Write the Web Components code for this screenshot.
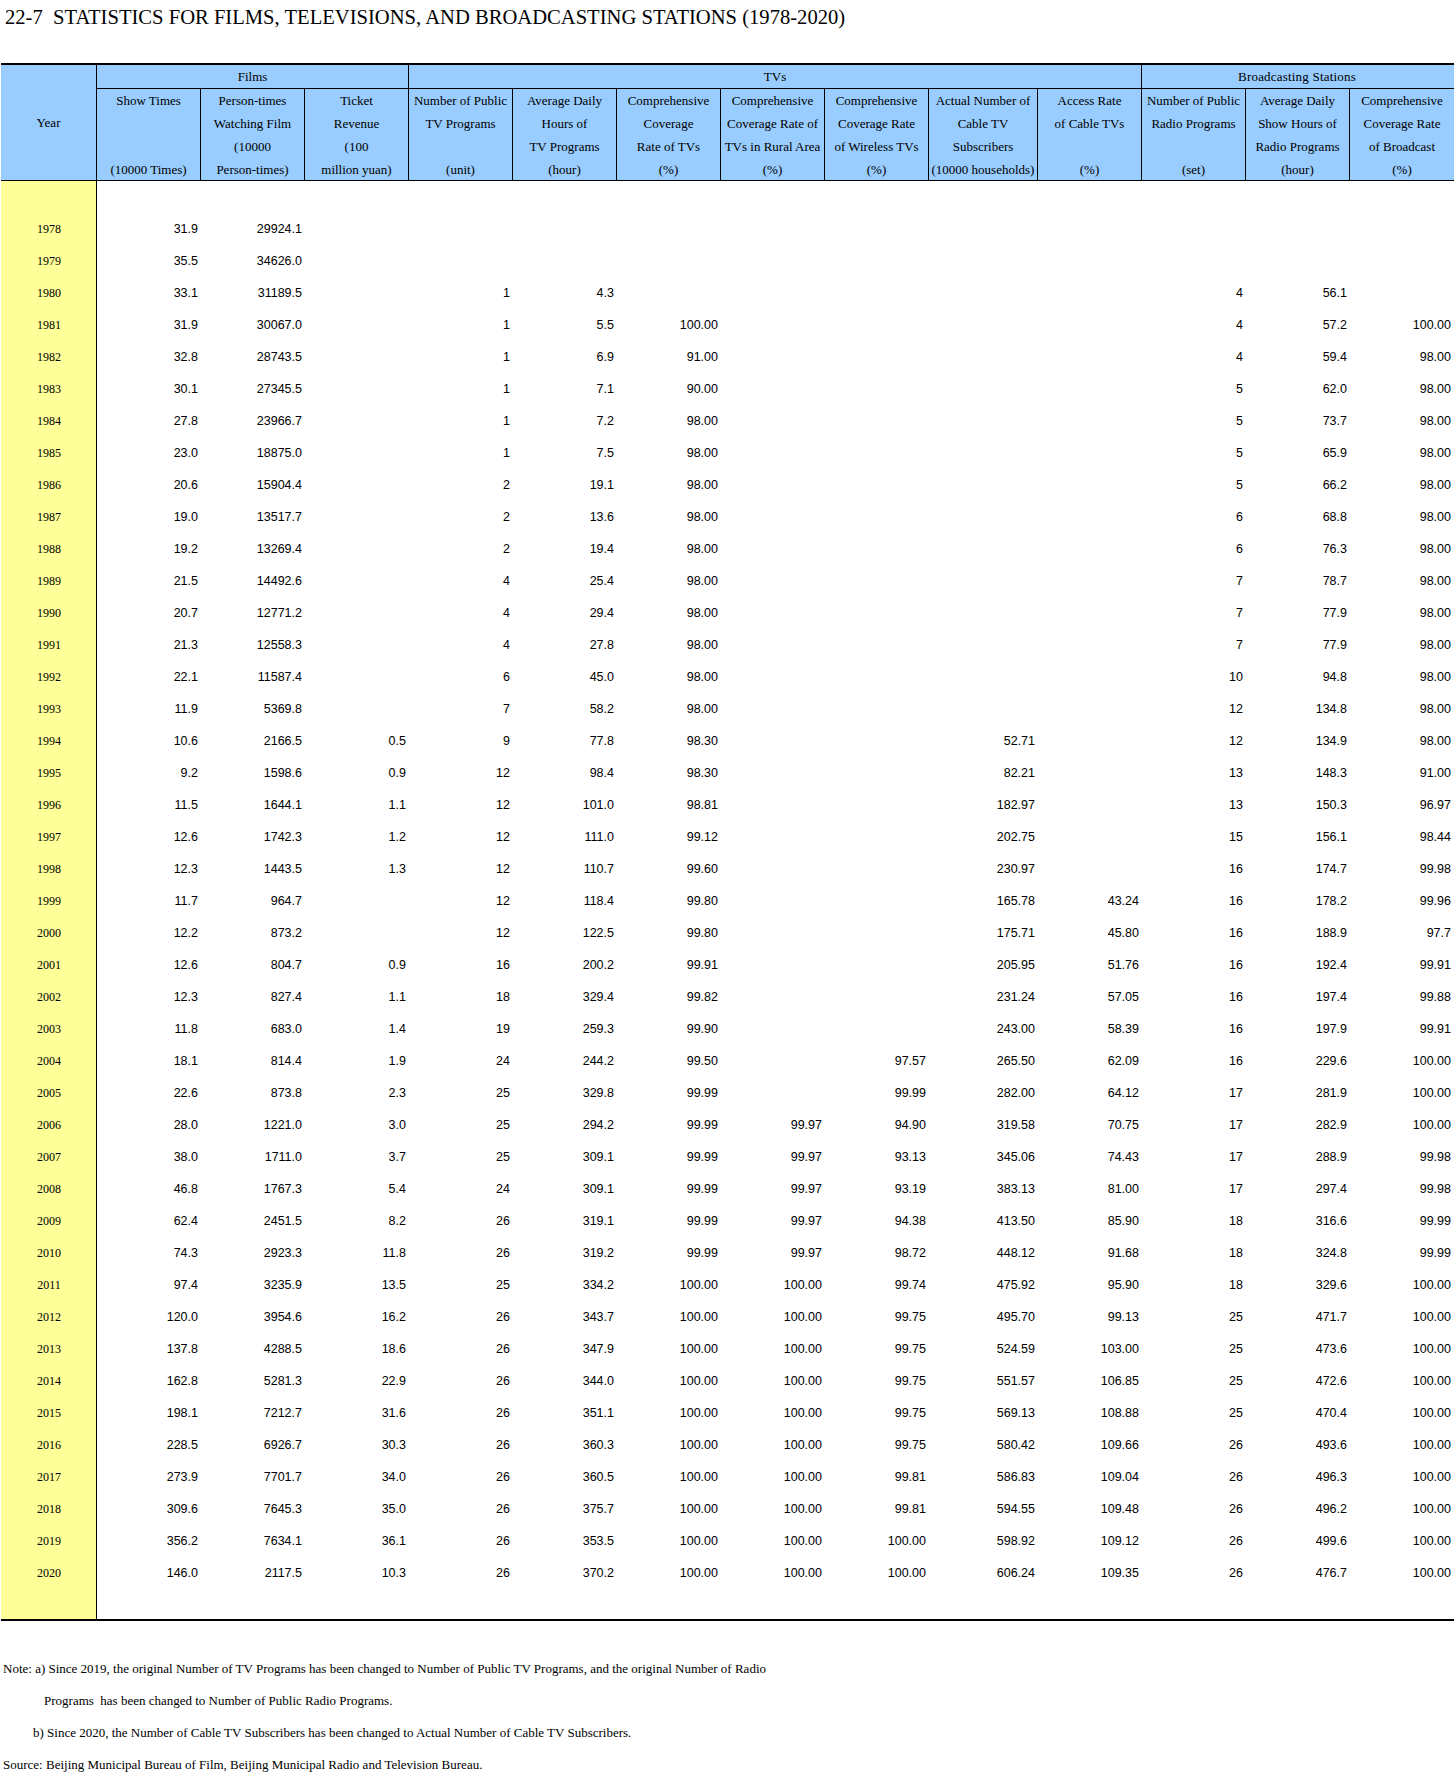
<!DOCTYPE html>
<html lang="en">
<head>
<meta charset="utf-8">
<title>22-7 Statistics for Films, Televisions, and Broadcasting Stations</title>
<style>
    html, body { margin: 0; background: #fff; }
    body { font-family: 'Liberation Serif', 'Times New Roman', serif; color: #000; }
</style>
</head>
<body>
<stat-sheet>
    <sheet-title>22-7  STATISTICS FOR FILMS, TELEVISIONS, AND BROADCASTING STATIONS (1978-2020)</sheet-title>
    <stat-table></stat-table>
    <sheet-note>Note: a) Since 2019, the original Number of TV Programs has been changed to Number of Public TV Programs, and the original Number of Radio</sheet-note>
    <sheet-note indent="44">Programs  has been changed to Number of Public Radio Programs.</sheet-note>
    <sheet-note indent="33">b) Since 2020, the Number of Cable TV Subscribers has been changed to Actual Number of Cable TV Subscribers.</sheet-note>
    <sheet-note>Source: Beijing Municipal Bureau of Film, Beijing Municipal Radio and Television Bureau.</sheet-note>
</stat-sheet>

<script>
const COLUMNS = '96px repeat(8, 104px) 109px repeat(4, 104px)';

const GROUPS = [
    { name: 'Films', span: 3 },
    { name: 'TVs', span: 7 },
    { name: 'Broadcasting Stations', span: 3 }
];

const HEADINGS = [
    ['Show Times', '', '', '(10000 Times)'],
    ['Person-times', 'Watching Film', '(10000', 'Person-times)'],
    ['Ticket', 'Revenue', '(100', 'million yuan)'],
    ['Number of Public', 'TV Programs', '', '(unit)'],
    ['Average Daily', 'Hours of', 'TV Programs', '(hour)'],
    ['Comprehensive', 'Coverage', 'Rate of TVs', '(%)'],
    ['Comprehensive', 'Coverage Rate of', 'TVs in Rural Area', '(%)'],
    ['Comprehensive', 'Coverage Rate', 'of Wireless TVs', '(%)'],
    ['Actual Number of', 'Cable TV', 'Subscribers', '(10000 households)'],
    ['Access Rate', 'of Cable TVs', '', '(%)'],
    ['Number of Public', 'Radio Programs', '', '(set)'],
    ['Average Daily', 'Show Hours of', 'Radio Programs', '(hour)'],
    ['Comprehensive', 'Coverage Rate', 'of Broadcast', '(%)']
];

// year, then the 13 columns in order. "-" is an empty cell
const ROWS = `
1978 31.9 29924.1
1979 35.5 34626.0
1980 33.1 31189.5 - 1 4.3 - - - - - 4 56.1 -
1981 31.9 30067.0 - 1 5.5 100.00 - - - - 4 57.2 100.00
1982 32.8 28743.5 - 1 6.9 91.00 - - - - 4 59.4 98.00
1983 30.1 27345.5 - 1 7.1 90.00 - - - - 5 62.0 98.00
1984 27.8 23966.7 - 1 7.2 98.00 - - - - 5 73.7 98.00
1985 23.0 18875.0 - 1 7.5 98.00 - - - - 5 65.9 98.00
1986 20.6 15904.4 - 2 19.1 98.00 - - - - 5 66.2 98.00
1987 19.0 13517.7 - 2 13.6 98.00 - - - - 6 68.8 98.00
1988 19.2 13269.4 - 2 19.4 98.00 - - - - 6 76.3 98.00
1989 21.5 14492.6 - 4 25.4 98.00 - - - - 7 78.7 98.00
1990 20.7 12771.2 - 4 29.4 98.00 - - - - 7 77.9 98.00
1991 21.3 12558.3 - 4 27.8 98.00 - - - - 7 77.9 98.00
1992 22.1 11587.4 - 6 45.0 98.00 - - - - 10 94.8 98.00
1993 11.9 5369.8 - 7 58.2 98.00 - - - - 12 134.8 98.00
1994 10.6 2166.5 0.5 9 77.8 98.30 - - 52.71 - 12 134.9 98.00
1995 9.2 1598.6 0.9 12 98.4 98.30 - - 82.21 - 13 148.3 91.00
1996 11.5 1644.1 1.1 12 101.0 98.81 - - 182.97 - 13 150.3 96.97
1997 12.6 1742.3 1.2 12 111.0 99.12 - - 202.75 - 15 156.1 98.44
1998 12.3 1443.5 1.3 12 110.7 99.60 - - 230.97 - 16 174.7 99.98
1999 11.7 964.7 - 12 118.4 99.80 - - 165.78 43.24 16 178.2 99.96
2000 12.2 873.2 - 12 122.5 99.80 - - 175.71 45.80 16 188.9 97.7
2001 12.6 804.7 0.9 16 200.2 99.91 - - 205.95 51.76 16 192.4 99.91
2002 12.3 827.4 1.1 18 329.4 99.82 - - 231.24 57.05 16 197.4 99.88
2003 11.8 683.0 1.4 19 259.3 99.90 - - 243.00 58.39 16 197.9 99.91
2004 18.1 814.4 1.9 24 244.2 99.50 - 97.57 265.50 62.09 16 229.6 100.00
2005 22.6 873.8 2.3 25 329.8 99.99 - 99.99 282.00 64.12 17 281.9 100.00
2006 28.0 1221.0 3.0 25 294.2 99.99 99.97 94.90 319.58 70.75 17 282.9 100.00
2007 38.0 1711.0 3.7 25 309.1 99.99 99.97 93.13 345.06 74.43 17 288.9 99.98
2008 46.8 1767.3 5.4 24 309.1 99.99 99.97 93.19 383.13 81.00 17 297.4 99.98
2009 62.4 2451.5 8.2 26 319.1 99.99 99.97 94.38 413.50 85.90 18 316.6 99.99
2010 74.3 2923.3 11.8 26 319.2 99.99 99.97 98.72 448.12 91.68 18 324.8 99.99
2011 97.4 3235.9 13.5 25 334.2 100.00 100.00 99.74 475.92 95.90 18 329.6 100.00
2012 120.0 3954.6 16.2 26 343.7 100.00 100.00 99.75 495.70 99.13 25 471.7 100.00
2013 137.8 4288.5 18.6 26 347.9 100.00 100.00 99.75 524.59 103.00 25 473.6 100.00
2014 162.8 5281.3 22.9 26 344.0 100.00 100.00 99.75 551.57 106.85 25 472.6 100.00
2015 198.1 7212.7 31.6 26 351.1 100.00 100.00 99.75 569.13 108.88 25 470.4 100.00
2016 228.5 6926.7 30.3 26 360.3 100.00 100.00 99.75 580.42 109.66 26 493.6 100.00
2017 273.9 7701.7 34.0 26 360.5 100.00 100.00 99.81 586.83 109.04 26 496.3 100.00
2018 309.6 7645.3 35.0 26 375.7 100.00 100.00 99.81 594.55 109.48 26 496.2 100.00
2019 356.2 7634.1 36.1 26 353.5 100.00 100.00 100.00 598.92 109.12 26 499.6 100.00
2020 146.0 2117.5 10.3 26 370.2 100.00 100.00 100.00 606.24 109.35 26 476.7 100.00
`.trim().split('\n').map(line => line.split(' '));

class StatSheet extends HTMLElement {
    constructor() {
        super();
        this.attachShadow({ mode: 'open' });
        this.shadowRoot.innerHTML = `
            <style>
                :host { display: block; width: 1454px; }
            </style>
            <slot></slot>
        `;
    }
}

class SheetTitle extends HTMLElement {
    constructor() {
        super();
        this.attachShadow({ mode: 'open' });
        this.shadowRoot.innerHTML = `
            <style>
                :host {
                    display: block;
                    height: 63px;
                    padding-left: 5px;
                    box-sizing: border-box;
                    font-size: 20.6px;
                    line-height: 34px;
                }
                slot { white-space: pre; }
            </style>
            <slot></slot>
        `;
    }
}

class SheetNote extends HTMLElement {
    constructor() {
        super();
        this.attachShadow({ mode: 'open' });
        this.shadowRoot.innerHTML = `
            <style>
                :host {
                    display: block;
                    padding-left: var(--indent, 3px);
                    font-size: 13px;
                    line-height: 32px;
                }
                slot { white-space: pre; }
            </style>
            <slot></slot>
        `;
    }

    connectedCallback() {
        const indent = this.getAttribute('indent');
        if (indent) {
            this.style.setProperty('--indent', `${indent}px`);
        }
    }
}

class StatHead extends HTMLElement {
    constructor() {
        super();
        this.attachShadow({ mode: 'open' });
        this.shadowRoot.innerHTML = `
            <style>
                :host {
                    display: grid;
                    grid-template-columns: var(--columns);
                    grid-template-rows: 24px 92px;
                    background: #99ccff;
                    font-size: 13px;
                    line-height: 23px;
                    text-align: center;
                }
                .cell {
                    box-sizing: border-box;
                    border-right: 1px solid #000;
                    border-bottom: 1px solid #000;
                    white-space: nowrap;
                }
                .cell:last-child { border-right: none; }
                .year {
                    grid-row: 1 / span 2;
                    display: flex;
                    align-items: center;
                    justify-content: center;
                }
                .group.last {
                    border-right: none;
                    letter-spacing: 0.2px;
                    padding-right: 2px;
                }
                .line { height: 23px; }
            </style>
            <div class="cell year">Year</div>
            ${GROUPS.map((group, i) => `
                <div class="cell group ${i === GROUPS.length - 1 ? 'last' : ''}" style="grid-column: span ${group.span}">${group.name}</div>
            `).join('')}
            ${HEADINGS.map(lines => `
                <div class="cell heading">${lines.map(line => `<div class="line">${line}</div>`).join('')}</div>
            `).join('')}
        `;
    }
}

class StatRow extends HTMLElement {
    constructor() {
        super();
        this.attachShadow({ mode: 'open' });
    }

    set values(values) {
        const [year, ...cells] = values;
        const filled = HEADINGS.map((_, i) => (cells[i] && cells[i] !== '-') ? cells[i] : '');
        this.shadowRoot.innerHTML = `
            <style>
                :host {
                    display: grid;
                    grid-template-columns: var(--columns);
                    height: 32px;
                    line-height: 32px;
                    font-family: 'Liberation Sans', Arial, sans-serif;
                    font-size: 12.5px;
                    text-align: right;
                }
                .year {
                    font-family: 'Liberation Serif', 'Times New Roman', serif;
                    font-size: 12px;
                    text-align: center;
                }
                .value { padding-right: 3px; }
            </style>
            <div class="year">${year}</div>
            ${filled.map(value => `<div class="value">${value}</div>`).join('')}
        `;
    }
}

class StatTable extends HTMLElement {
    constructor() {
        super();
        this.attachShadow({ mode: 'open' });
        this.shadowRoot.innerHTML = `
            <style>
                :host {
                    display: block;
                    margin: 0 0 32px 1px;
                    width: 1453px;
                    border-top: 2px solid #000;
                    border-bottom: 2px solid #000;
                    --columns: ${COLUMNS};
                }
                .body {
                    /* yellow year column with its rule runs through the blank rows too */
                    background: linear-gradient(to right, #ffff99 95px, #000 95px, #000 96px, transparent 96px);
                    padding: 32px 0 30px;
                }
            </style>
            <stat-head></stat-head>
            <div class="body"></div>
        `;
    }

    connectedCallback() {
        const body = this.shadowRoot.querySelector('.body');
        ROWS.forEach(values => {
            const row = document.createElement('stat-row');
            row.values = values;
            body.appendChild(row);
        });
    }
}

customElements.define('stat-sheet', StatSheet);
customElements.define('sheet-title', SheetTitle);
customElements.define('sheet-note', SheetNote);
customElements.define('stat-head', StatHead);
customElements.define('stat-row', StatRow);
customElements.define('stat-table', StatTable);
</script>
</body>
</html>
